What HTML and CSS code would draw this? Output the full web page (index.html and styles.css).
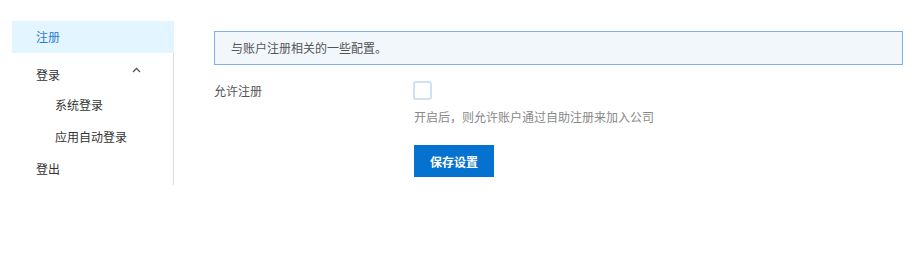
FILE: index.html
```html
<!DOCTYPE html>
<html lang="zh-CN">
<head>
    <meta charset="UTF-8">
    <title>注册设置</title>
    <link rel="stylesheet" href="styles.css">
</head>
<body>
<div class="page">
    <ul class="side-menu">
        <li class="menu-item active">注册</li>
        <li class="menu-group">
            <div class="group-title">
                <span>登录</span>
                <svg class="caret" width="9" height="6" viewBox="0 0 9 6"><path d="M1 5 L4.5 1.5 L8 5" fill="none" stroke="#555" stroke-width="1.3"/></svg>
            </div>
            <ul class="sub-menu">
                <li class="sub-item">系统登录</li>
                <li class="sub-item">应用自动登录</li>
            </ul>
        </li>
        <li class="menu-item">登出</li>
    </ul>

    <div class="content">
        <div class="alert">与账户注册相关的一些配置。</div>

        <div class="form-row first">
            <label class="form-label">允许注册</label>
            <div class="form-field">
                <span class="checkbox"></span>
            </div>
        </div>
        <div class="form-row">
            <div class="form-label"></div>
            <div class="form-field">
                <p class="help">开启后，则允许账户通过自助注册来加入公司</p>
                <button class="btn-save">保存设置</button>
            </div>
        </div>
    </div>
</div>
</body>
</html>
```

FILE: styles.css
```css
* {
    box-sizing: border-box;
}

body {
    margin: 0;
    font-family: "Microsoft YaHei", "Noto Sans CJK SC", "Noto Sans", sans-serif;
    font-size: 12px;
    color: #333;
    background: #fff;
}

ul {
    list-style: none;
    margin: 0;
    padding: 0;
}

.page {
    display: flex;
    align-items: flex-start;
    padding: 21px 19px 0 12px;
}

.side-menu {
    width: 162px;
    flex-shrink: 0;
    border-right: 1px solid #dcdbe6;
}
.side-menu .menu-item {
    height: 32px;
    line-height: 32px;
    padding-left: 24px;
}
.side-menu .menu-item.active {
    color: #2a7fd4;
    background: #e3f5fe;
    margin-right: -1px;
    margin-bottom: 6px;
}
.side-menu .group-title {
    height: 30px;
    padding: 0 32px 0 24px;
    display: flex;
    align-items: center;
    justify-content: space-between;
}
.side-menu .caret {
    margin-top: -9px;
}
.side-menu .sub-item {
    height: 32px;
    line-height: 32px;
    padding-left: 43px;
}

.content {
    flex: 1;
    margin-left: 40px;
    padding-top: 10px;
}

.alert {
    height: 34px;
    line-height: 32px;
    padding-left: 16px;
    border: 1px solid #7cb2e7;
    background: #f2f7fc;
    color: #555;
}

.form-row {
    display: flex;
}
.form-row.first {
    margin-top: 16px;
}
.form-label {
    width: 200px;
    flex-shrink: 0;
    display: flex;
    align-items: center;
    color: #555;
}
.form-field {
    flex: 1;
}

.checkbox {
    display: block;
    width: 19px;
    height: 19px;
    margin-left: -1px;
    border: 2px solid #cfe1f3;
    border-radius: 3px;
    background: #fff;
}

.help {
    margin: 8px 0 19px 0;
    line-height: 18px;
    color: #888;
}

.btn-save {
    width: 80px;
    height: 32px;
    border: 0;
    border-radius: 0;
    background: #0572d0;
    color: #fff;
    font-family: inherit;
    font-size: 12px;
    font-weight: 700;
    cursor: pointer;
}
```
